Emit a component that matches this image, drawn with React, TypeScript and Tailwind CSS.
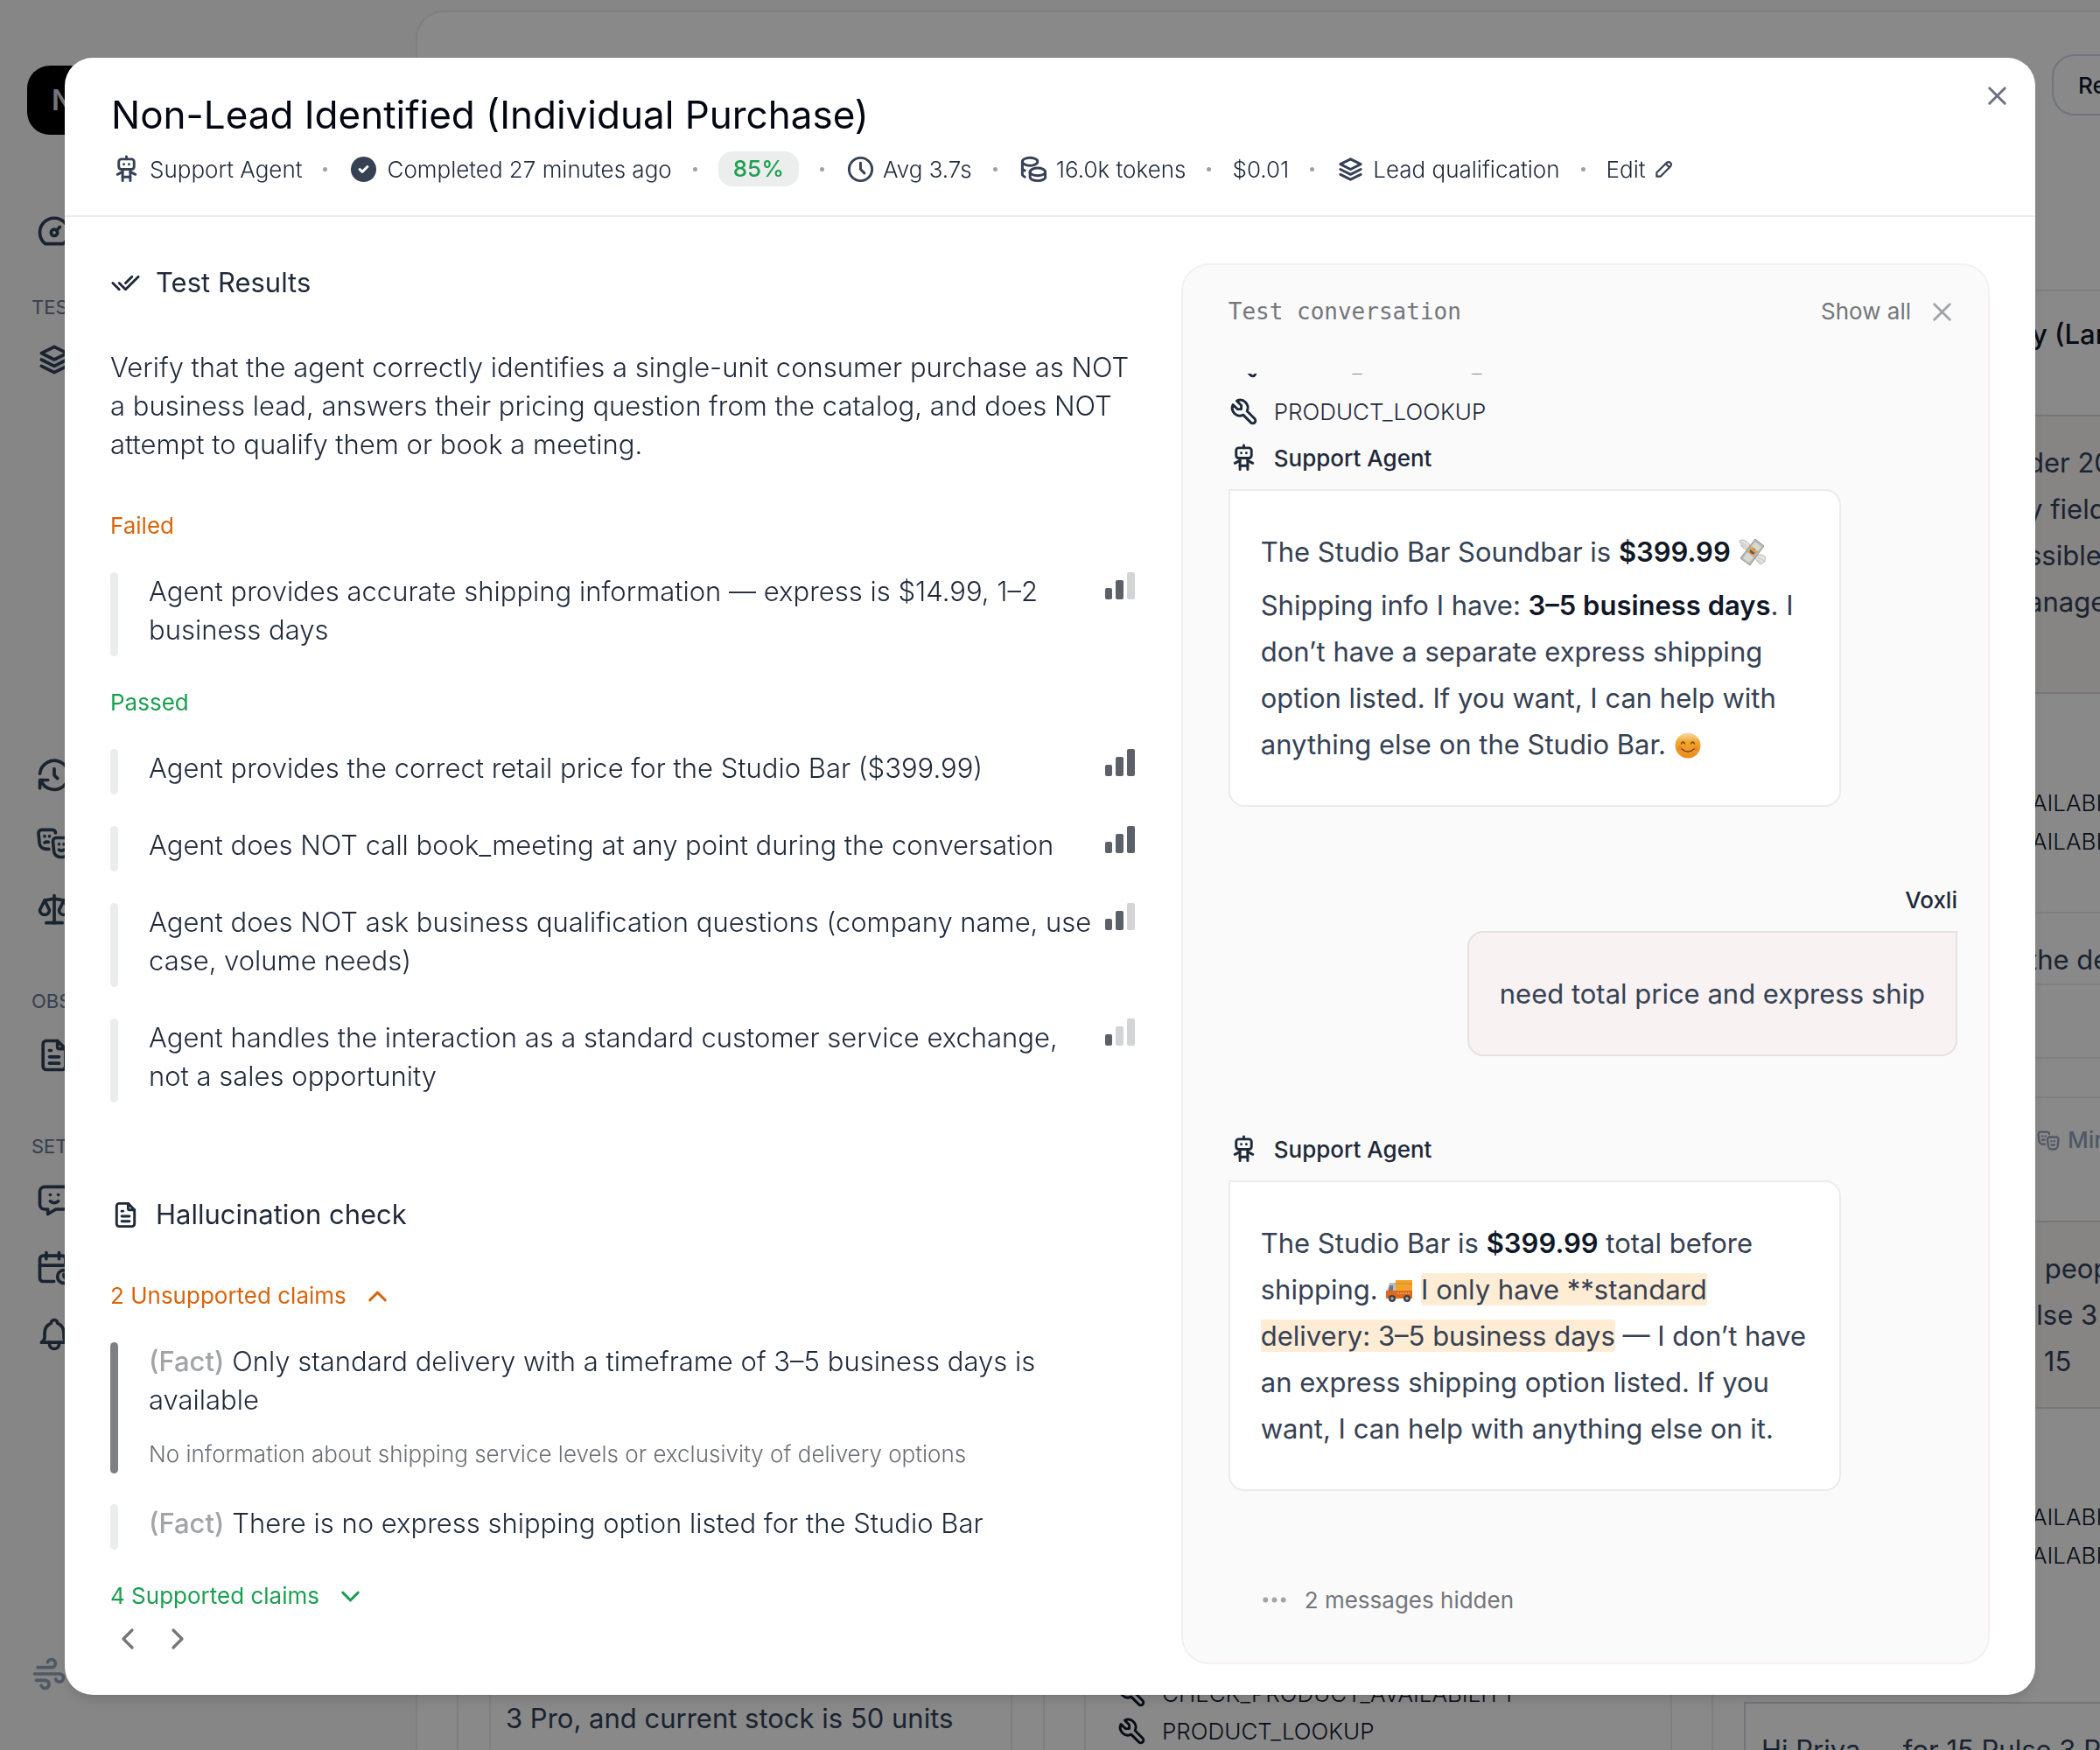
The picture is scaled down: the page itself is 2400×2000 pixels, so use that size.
import React from "react";
import {
  TbBell,
  TbCalendarTime,
  TbChecks,
  TbChevronDown,
  TbChevronLeft,
  TbChevronRight,
  TbChevronUp,
  TbCircleCheckFilled,
  TbClock,
  TbCoins,
  TbDashboard,
  TbDots,
  TbFileText,
  TbHistory,
  TbMasksTheater,
  TbMessageChatbot,
  TbPencil,
  TbRobot,
  TbScale,
  TbStack2,
  TbTool,
  TbWind,
  TbX,
} from "react-icons/tb";

const FAILED = [
  { text: "Agent provides accurate shipping information — express is $14.99, 1–2 business days", level: 2 },
];

const PASSED = [
  { text: "Agent provides the correct retail price for the Studio Bar ($399.99)", level: 3 },
  { text: "Agent does NOT call book_meeting at any point during the conversation", level: 3 },
  { text: "Agent does NOT ask business qualification questions (company name, use case, volume needs)", level: 2 },
  { text: "Agent handles the interaction as a standard customer service exchange, not a sales opportunity", level: 1 },
];

/* Emoji used inside the chat bubbles */

function MoneyWings() {
  return (
    <svg role="img" aria-label="money with wings" viewBox="0 0 32 32" className="inline-block h-8 w-8 align-[-5px]">
      <path d="M13 8C9 2 3 1 1 3c0 2 1 3 2 4-1 1 0 3 2 3 0 2 2 3 4 3z" fill="#e4e4e2" stroke="#a8a8a4" strokeWidth=".8" />
      <path d="M21 20c4-2 9-1 10 3-1 1-1 2-1 4-2 1-3 1-4 3-3-1-6-4-7-8z" fill="#e4e4e2" stroke="#a8a8a4" strokeWidth=".8" />
      <path d="M3 5l7 4M4 8l6 3M22 22l7 4M22 25l4 3" stroke="#b9b9b5" strokeWidth=".8" fill="none" />
      <path d="M19 1l10 8-16 22L2 23z" fill="#b8b9b3" stroke="#83847f" strokeWidth=".8" />
      <path d="M19 4l7 6-4 5-7-6zM10 16l7 6-5 6-7-5z" fill="#d9d9d3" />
      <circle cx="16" cy="15" r="3.4" fill="#5d605c" />
      <path d="M13 9l9 7-2 2-9-7zM10 14l9 7-1 1-9-7z" fill="#e9a04a" />
    </svg>
  );
}

function SmileFace() {
  return (
    <svg role="img" aria-label="smiling face" viewBox="0 0 32 32" className="inline-block h-8 w-8 align-[-6px]">
      <defs>
        <linearGradient id="face" x1="0" y1="0" x2="0" y2="1">
          <stop offset="0" stopColor="#f6dcb4" />
          <stop offset=".35" stopColor="#f2a92c" />
          <stop offset="1" stopColor="#ea8a1c" />
        </linearGradient>
      </defs>
      <circle cx="16" cy="16" r="14.5" fill="url(#face)" />
      <circle cx="7" cy="19" r="3" fill="#ee7433" opacity=".5" />
      <circle cx="25" cy="19" r="3" fill="#ee7433" opacity=".5" />
      <path d="M8.5 14q2-4 4 0M19.5 14q2-4 4 0" stroke="#7a3f10" strokeWidth="1.5" fill="none" strokeLinecap="round" />
      <path d="M9 20q7 6 14 0" stroke="#7a3f10" strokeWidth="1.5" fill="none" strokeLinecap="round" />
    </svg>
  );
}

function Truck() {
  return (
    <svg role="img" aria-label="delivery truck" viewBox="0 0 32 32" className="inline-block h-8 w-8 align-[-6px]">
      <path d="M12 4h19v13H12z" fill="#f2a32b" />
      <path d="M12 8h19" stroke="#d98a1c" strokeWidth="1" />
      <path d="M5 7h7v10H2z" fill="#b9bdc2" />
      <path d="M5.5 10H9v6H3.5z" fill="#6f7780" />
      <path d="M1 16h30v9H1z" fill="#dd6a1e" />
      <path d="M14 19h14" stroke="#f7c27c" strokeWidth="1.2" strokeDasharray="2 1" />
      <circle cx="8" cy="25" r="4" fill="#3c4046" />
      <circle cx="8" cy="25" r="1.7" fill="#aeb3b9" />
      <circle cx="25" cy="25" r="4" fill="#3c4046" />
      <circle cx="25" cy="25" r="1.7" fill="#aeb3b9" />
    </svg>
  );
}

function SignalBars({ level }: { level: number }) {
  return (
    <div className="flex h-[31px] shrink-0 items-end gap-1">
      <span className="h-[13px] w-2 rounded-[2px] bg-[#5c6068]" />
      <span className={`h-[22px] w-[9px] rounded-[2px] ${level > 1 ? "bg-[#5c6068]" : "bg-[#d3d4d6]"}`} />
      <span className={`h-[31px] w-[9px] rounded-[2px] ${level > 2 ? "bg-[#5c6068]" : "bg-[#d3d4d6]"}`} />
    </div>
  );
}

function Criterion({ text, level }: { text: string; level: number }) {
  return (
    <li className="flex">
      <span className="mr-[35px] w-[9px] shrink-0 rounded-full bg-[#ebecec]" />
      <p className="flex-1 pb-2 text-[31px] leading-[44px] font-light">{text}</p>
      <SignalBars level={level} />
    </li>
  );
}

function Dot() {
  return <span className="h-[5px] w-[5px] rounded-full bg-gray-400" />;
}

function ToolRow({ name }: { name: string }) {
  return (
    <div className="flex h-[54px] shrink-0 items-center gap-[17px] text-[26px] font-light">
      <TbTool className="h-[35px] w-[35px]" />
      {name}
    </div>
  );
}

function AgentRow() {
  return (
    <div className="mb-[9px] flex h-[53px] shrink-0 items-center gap-[17px] text-[26px] font-medium">
      <TbRobot className="h-[35px] w-[35px]" />
      Support Agent
    </div>
  );
}

function Sidebar() {
  const icon = "h-[44px] w-[44px]";
  return (
    <nav className="flex w-[475px] shrink-0 flex-col text-slate-700">
      <div className="mt-[75px] ml-[31px] flex h-[79px] w-[79px] items-center rounded-[26px] bg-black pl-7 text-[32px] font-semibold text-gray-300">
        N
      </div>
      <div className="mt-[88px] pl-10">
        <TbDashboard className={icon} />
      </div>
      <p className="mt-[49px] pl-9 text-[22px] leading-8 text-slate-500">TESTING</p>
      <div className="mt-[22px] pl-10">
        <TbStack2 className={icon} />
      </div>
      <div className="mt-[431px] flex flex-col gap-[33px] pl-10">
        <TbHistory className={icon} />
        <TbMasksTheater className={icon} />
        <TbScale className={icon} />
      </div>
      <p className="mt-[66px] pl-9 text-[22px] leading-8 text-slate-500">OBSERVE</p>
      <div className="mt-6 pl-10">
        <TbFileText className={icon} />
      </div>
      <p className="mt-[66px] pl-9 text-[22px] leading-8 text-slate-500">SETTINGS</p>
      <div className="mt-[23px] flex flex-col gap-[33px] pl-10">
        <TbMessageChatbot className={icon} />
        <TbCalendarTime className={icon} />
        <TbBell className={icon} />
      </div>
      <TbWind className="mt-auto mb-[65px] ml-[34px] h-[44px] w-[44px] text-slate-400" />
    </nav>
  );
}

function Backdrop() {
  return (
    <div className="flex h-screen overflow-hidden bg-[#f3f4f3] text-slate-700">
      <Sidebar />
      <main className="mt-3 flex min-w-0 flex-1 flex-col overflow-hidden rounded-tl-[32px] border-t-2 border-l-2 border-gray-200 bg-[#fafafa] pl-[45px]">
        <div className="flex shrink-0 items-start justify-between">
          <h2 className="mt-[41px] font-['DejaVu_Sans_Mono',monospace] text-[30px] text-slate-500">TEST RESULTS</h2>
          <button className="mt-12 -mr-[78px] h-[70px] rounded-[26px] border-2 border-slate-300 px-7 text-[26px] font-medium text-slate-900">
            Rerun
          </button>
        </div>

        <div className="flex min-h-0 flex-1 gap-[45px]">
          <section className="flex w-[672px] shrink-0 flex-col justify-end border-x-2 border-gray-200 px-[35px]">
            <p className="h-[63px] border-x-2 border-gray-200 pl-[17px] text-[31px] leading-[53px]">
              3 Pro, and current stock is 50 units
            </p>
          </section>
          <section className="flex w-[672px] shrink-0 flex-col justify-end border-x-2 border-gray-200 px-[35px] text-[26px] text-slate-900">
            {["CHECK_PRODUCT_AVAILABILITY", "PRODUCT_LOOKUP"].map((tool) => (
              <div key={tool} className="flex h-[43px] items-center gap-[17px] font-light">
                <TbTool className="h-[35px] w-[35px]" />
                {tool}
              </div>
            ))}
          </section>
          <section className="flex w-[672px] shrink-0 flex-col border-l-2 border-gray-200 whitespace-nowrap">
            <div className="mt-[199px] h-[143px] shrink-0 border-t-2 border-gray-200 pt-[26px] pl-[364px] text-[31px] font-medium text-slate-900">
              y (Large Order)
            </div>
            <div className="ml-[35px] h-[319px] shrink-0 border-2 border-[#d8d8d8] bg-[#f6f0f0] pt-[26px] pl-[322px] text-[31px] leading-[53px]">
              der 200
              <br />y fields
              <br />
              ssible
              <br />
              anager
            </div>
            <div className="mt-[103px] shrink-0 pl-[364px] text-[26px] leading-[44px] font-light text-slate-900">
              AILABILITY
              <br />
              AILABILITY
            </div>
            <div className="mt-[58px] h-[84px] shrink-0 border-y-2 border-gray-200 pt-[26px] pl-[360px] text-[31px] leading-[53px]">
              the deal
            </div>
            <div className="mt-[82px] h-[47px] shrink-0 border-y-2 border-gray-200" />
            <div className="mt-[30px] flex shrink-0 items-center gap-2 pl-[369px] text-[26px] leading-[36px] font-medium text-slate-400">
              <TbMasksTheater className="h-[28px] w-[28px]" />
              Mindful
            </div>
            <div className="mt-[74px] ml-[35px] h-[215px] shrink-0 border-2 border-[#d8d8d8] bg-[#f6f0f0] pt-[26px] pl-[314px] text-[31px] leading-[53px]">
              d people
              <br />
              ulse 3
              <br />e 15
            </div>
            <div className="mt-[102px] shrink-0 pl-[364px] text-[26px] leading-[44px] font-light text-slate-900">
              AILABILITY
              <br />
              AILABILITY
            </div>
            <div className="mt-[145px] ml-[35px] h-[100px] shrink-0 border-2 border-gray-300 pt-[26px] pl-[18px] text-[31px] leading-[53px]">
              Hi Priya — for 15 Pulse 3 Pro
            </div>
          </section>
        </div>
      </main>
    </div>
  );
}

function ModalHeader() {
  return (
    <header className="flex justify-between border-b-2 border-[#ececed] pt-[39px] pr-[26px] pb-[31px] pl-[53px]">
      <div>
        <h1 className="text-[44px] leading-[53px] text-gray-950">Non-Lead Identified (Individual Purchase)</h1>
        <div className="mt-[13px] flex h-[44px] items-center gap-6 text-[26px] font-light">
          <span className="flex items-center gap-[9px]">
            <TbRobot className="h-[35px] w-[35px] text-gray-700" />
            Support Agent
          </span>
          <Dot />
          <span className="flex items-center gap-[9px]">
            <TbCircleCheckFilled className="h-[35px] w-[35px] text-gray-700" />
            Completed 27 minutes ago
          </span>
          <Dot />
          <span className="rounded-2xl bg-[#eceded] px-[17px] text-[26px] leading-[40px] font-medium text-[#1c9f50]">
            85%
          </span>
          <Dot />
          <span className="flex items-center gap-2">
            <TbClock className="h-[35px] w-[35px] text-gray-700" />
            Avg 3.7s
          </span>
          <Dot />
          <span className="flex items-center gap-2">
            <TbCoins className="h-[35px] w-[35px] text-gray-700" />
            16.0k tokens
          </span>
          <Dot />
          <span>$0.01</span>
          <Dot />
          <a href="#suite" className="flex items-center gap-2">
            <TbStack2 className="h-[35px] w-[35px] text-gray-700" />
            Lead qualification
          </a>
          <Dot />
          <button className="flex items-center gap-2">
            Edit
            <TbPencil className="h-[26px] w-[26px] text-gray-700" />
          </button>
        </div>
      </div>
      <button aria-label="Close" className="-mt-[13px] h-[35px] w-[35px] text-gray-500">
        <TbX className="h-[35px] w-[35px]" />
      </button>
    </header>
  );
}

function Results() {
  return (
    <div className="flex min-w-0 flex-col">
      <h2 className="flex items-center gap-[17px] text-[31px] leading-[44px]">
        <TbChecks className="h-[35px] w-[35px]" />
        Test Results
      </h2>
      <p className="mt-[53px] text-[31px] leading-[44px] font-light">
        Verify that the agent correctly identifies a single-unit consumer purchase as NOT a business lead, answers their
        pricing question from the catalog, and does NOT attempt to qualify them or book a meeting.
      </p>

      <h3 className="mt-[53px] text-[26px] leading-[36px] text-[#d9640c]">Failed</h3>
      <ul className="mt-[35px] flex flex-col gap-9">
        {FAILED.map((item) => (
          <Criterion key={item.text} {...item} />
        ))}
      </ul>

      <h3 className="mt-[35px] text-[26px] leading-[36px] text-[#1c9f50]">Passed</h3>
      <ul className="mt-[35px] flex flex-col gap-9">
        {PASSED.map((item) => (
          <Criterion key={item.text} {...item} />
        ))}
      </ul>

      <h2 className="mt-[106px] flex items-center gap-[17px] text-[31px] leading-[44px]">
        <TbFileText className="h-[35px] w-[35px]" />
        Hallucination check
      </h2>
      <button className="mt-[53px] flex items-center gap-[18px] text-[26px] leading-[36px] text-[#d9640c]">
        2 Unsupported claims
        <TbChevronUp className="h-[35px] w-[35px]" />
      </button>
      <ul className="mt-[35px] flex flex-col gap-[35px]">
        <li className="flex gap-[35px]">
          <span className="w-[9px] shrink-0 rounded-full bg-[#7f8081]" />
          <div className="pb-1">
            <p className="text-[31px] leading-[44px] font-light">
              <span className="font-medium text-[#a2a4a7]">(Fact)</span> Only standard delivery with a timeframe of 3–5
              business days is available
            </p>
            <p className="mt-[22px] text-[26px] leading-[36px] font-light text-[#6c6e75]">
              No information about shipping service levels or exclusivity of delivery options
            </p>
          </div>
        </li>
        <li className="flex gap-[35px]">
          <span className="w-[9px] shrink-0 rounded-full bg-[#ebecec]" />
          <p className="pb-2 text-[31px] leading-[44px] font-light">
            <span className="font-medium text-[#a2a4a7]">(Fact)</span> There is no express shipping option listed for the
            Studio Bar
          </p>
        </li>
      </ul>
      <button className="mt-[35px] flex items-center gap-[18px] text-[26px] leading-[36px] text-[#1c9f50]">
        4 Supported claims
        <TbChevronDown className="h-[35px] w-[35px]" />
      </button>
      <div className="mt-[11px] flex gap-[17px] text-[#75767a]">
        <button aria-label="Previous test">
          <TbChevronLeft className="h-10 w-10" />
        </button>
        <button aria-label="Next test">
          <TbChevronRight className="h-10 w-10" />
        </button>
      </div>
    </div>
  );
}

function Conversation() {
  const bubble =
    "w-[84%] shrink-0 rounded-[18px] rounded-tl-none border-2 border-[#ececed] bg-white py-[43px] pr-[26px] pl-[35px] text-[31px] leading-[53px] text-gray-700";
  return (
    <aside className="flex min-h-0 min-w-0 flex-col rounded-[32px] border-2 border-[#f4f0f1] bg-[#fafafa] pt-[31px] pr-[35px] pb-[28px] pl-[52px]">
      <div className="flex items-center justify-between leading-[44px] text-[#73757b]">
        <h2 className="font-['DejaVu_Sans_Mono',monospace] text-[26px]">Test conversation</h2>
        <div className="flex items-center gap-[18px] text-[26px]">
          <button>Show all</button>
          <button aria-label="Close conversation" className="text-[#a2a4a7]">
            <TbX className="h-[35px] w-[35px]" />
          </button>
        </div>
      </div>

      <div className="mt-[49px] flex min-h-0 flex-1 flex-col justify-end overflow-hidden">
        <ToolRow name="CHECK_PRODUCT_AVAILABILITY" />
        <ToolRow name="PRODUCT_LOOKUP" />
        <AgentRow />
        <div className={bubble}>
          <p>
            The Studio Bar Soundbar is <strong className="font-semibold text-gray-900">$399.99</strong> <MoneyWings />
          </p>
          <p className="mt-2">
            Shipping info I have: <strong className="font-semibold text-gray-900">3–5 business days</strong>. I don’t have a
            separate express shipping option listed. If you want, I can help with anything else on the Studio Bar.{" "}
            <SmileFace />
          </p>
        </div>

        <div className="mt-20 mb-[9px] h-[53px] shrink-0 text-right text-[26px] leading-[53px] font-medium">Voxli</div>
        <p className="shrink-0 self-end rounded-[18px] rounded-tr-none border-2 border-[#e6e1e2] bg-[#f8f2f2] px-[35px] py-[43px] text-[31px] leading-[53px] text-gray-700">
          need total price and express ship
        </p>

        <div className="mt-20 shrink-0">
          <AgentRow />
        </div>
        <div className={bubble}>
          <p>
            The Studio Bar is <strong className="font-semibold text-gray-900">$399.99</strong> total before shipping.{" "}
            <Truck />{" "}
            <mark className="rounded-[4px] bg-[#ffecd5] text-gray-700">
              I only have **standard delivery: 3–5 business days
            </mark>{" "}
            — I don’t have an express shipping option listed. If you want, I can help with anything else on it.
          </p>
        </div>

        <div className="mt-20 flex h-[88px] shrink-0 items-center gap-[17px] pl-[35px] text-[26px] text-[#73757b]">
          <TbDots className="h-[35px] w-[35px] text-[#a2a4a7]" />
          2 messages hidden
        </div>
      </div>
    </aside>
  );
}

export default function App() {
  return (
    <div className="font-['Inter',sans-serif] text-gray-800">
      <Backdrop />
      <div className="fixed inset-0 bg-black/45 px-[74px] pt-[66px] pb-[63px]">
        <div
          role="dialog"
          aria-modal="true"
          className="flex h-full flex-col overflow-hidden rounded-[32px] bg-white shadow-lg"
        >
          <ModalHeader />
          <div className="grid min-h-0 flex-1 grid-cols-[38fr_30fr] gap-[53px] px-[52px] pt-[53px] pb-[35px]">
            <Results />
            <Conversation />
          </div>
        </div>
      </div>
    </div>
  );
}
